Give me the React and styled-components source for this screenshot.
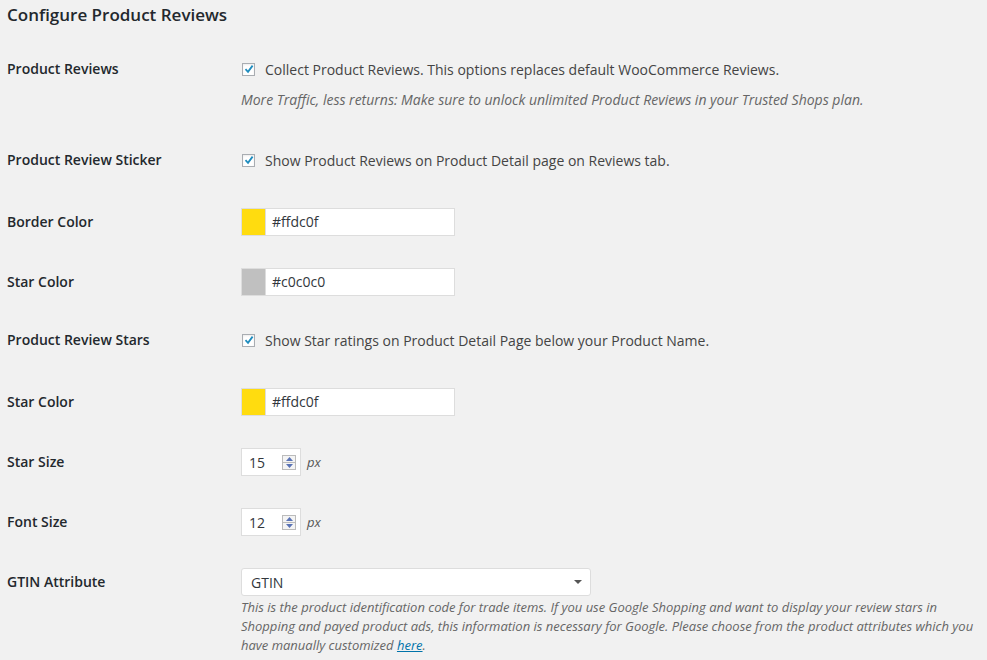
import React from 'react';
import styled, { createGlobalStyle } from 'styled-components';

//------------- Styling -------------//

const GlobalStyle = createGlobalStyle`
    html, body {
        margin: 0;
        padding: 0;
        background: #f1f1f1;
    }
    body {
        font-family: "Open Sans", "Liberation Sans", sans-serif;
        font-size: 14px;
        color: #444;
    }
`;

const Page = styled.div`
    padding: 0 7px;
`;

const Heading = styled.h2`
    margin: 0 0 11px;
    font-size: 17px;
    line-height: 30px;
    font-weight: 600;
    color: #23282d;
`;

const Row = styled.div`
    display: grid;
    grid-template-columns: 234px 1fr;
    padding: ${p => (p.check ? '14px 0 18px' : '16px 0')};
`;

const Label = styled.div`
    font-weight: 600;
    color: #23282d;
    line-height: 28px;
`;

const Field = styled.div`
    display: flex;
    flex-direction: column;
`;

const Line = styled.div`
    display: flex;
    align-items: center;
    height: 28px;
    gap: ${p => p.gap || 0}px;
`;

const Box = styled.span`
    width: 11px;
    height: 11px;
    border: 1px solid #a9adb2;
    background: #fff;
    display: flex;
    align-items: center;
    justify-content: center;
    margin-left: 1px;
    box-shadow: inset 0 1px 2px rgba(0, 0, 0, 0.08);
`;

const Description = styled.p`
    margin: ${p => p.space || '7px 0 5px'};
    font-size: ${p => p.size || 13}px;
    line-height: 19px;
    font-style: italic;
    color: #666;
    max-width: 740px;

    a {
        color: #0073aa;
        text-decoration: underline;
    }
`;

const ColorField = styled.div`
    display: flex;
    width: 212px;
    height: 26px;
    border: 1px solid #ddd;
    background: #fff;
`;

const Swatch = styled.span`
    width: 23px;
    background: ${p => p.color};
    border-right: 1px solid #ddd;
`;

const ColorValue = styled.span`
    padding-left: 6px;
    line-height: 26px;
    color: #32373c;
`;

const NumberField = styled.div`
    display: flex;
    align-items: center;
    justify-content: space-between;
    box-sizing: border-box;
    width: 60px;
    height: 28px;
    padding: 0 3px 0 7px;
    border: 1px solid #ddd;
    background: #fff;
    color: #32373c;
`;

const Spinner = styled.span`
    display: flex;
    flex-direction: column;
    width: 14px;
    height: 15px;
    border: 1px solid #bbb;
    background: #f4f4f4;
    box-sizing: border-box;
    margin-right: 1px;
`;

const SpinHalf = styled.span`
    flex: 1;
    display: flex;
    align-items: center;
    justify-content: center;
    & + & {
        border-top: 1px solid #bbb;
    }
`;

const Unit = styled.span`
    font-style: italic;
    font-size: 13px;
    color: #555;
`;

const Select = styled.div`
    display: flex;
    align-items: center;
    justify-content: space-between;
    box-sizing: border-box;
    width: 350px;
    height: 28px;
    padding: 0 8px 0 9px;
    border: 1px solid #ddd;
    border-radius: 3px;
    background: #fff;
    color: #32373c;
`;

//------------- Component -------------//

const Check = ({ children }) => (
    <Line gap={10}>
        <Box>
            <svg width="10" height="10" viewBox="0 0 10 10">
                <path d="M1.5 5.2 L4 7.8 L8.6 1.6" fill="none" stroke="#1e8cbe" strokeWidth="1.8" />
            </svg>
        </Box>
        <span>{children}</span>
    </Line>
);

const Arrow = ({ up }) => (
    <svg width="7" height="4" viewBox="0 0 7 4">
        <path d={up ? 'M0 4 L3.5 0 L7 4 Z' : 'M0 0 L3.5 4 L7 0 Z'} fill="#5a73b5" />
    </svg>
);

const Number = ({ value }) => (
    <Line gap={6}>
        <NumberField>
            <span>{value}</span>
            <Spinner>
                <SpinHalf><Arrow up /></SpinHalf>
                <SpinHalf><Arrow /></SpinHalf>
            </Spinner>
        </NumberField>
        <Unit>px</Unit>
    </Line>
);

const Color = ({ value }) => (
    <Line>
        <ColorField>
            <Swatch color={value} />
            <ColorValue>{value}</ColorValue>
        </ColorField>
    </Line>
);

export default function App() {
    return (
        <Page>
            <GlobalStyle />
            <Heading>Configure Product Reviews</Heading>

            <Row check>
                <Label>Product Reviews</Label>
                <Field>
                    <Check>Collect Product Reviews. This options replaces default WooCommerce Reviews.</Check>
                    <Description size={14}>More Traffic, less returns: Make sure to unlock unlimited Product Reviews in your Trusted Shops plan.</Description>
                </Field>
            </Row>

            <Row check>
                <Label>Product Review Sticker</Label>
                <Field>
                    <Check>Show Product Reviews on Product Detail page on Reviews tab.</Check>
                </Field>
            </Row>

            <Row>
                <Label>Border Color</Label>
                <Field><Color value="#ffdc0f" /></Field>
            </Row>

            <Row>
                <Label>Star Color</Label>
                <Field><Color value="#c0c0c0" /></Field>
            </Row>

            <Row check>
                <Label>Product Review Stars</Label>
                <Field>
                    <Check>Show Star ratings on Product Detail Page below your Product Name.</Check>
                </Field>
            </Row>

            <Row>
                <Label>Star Color</Label>
                <Field><Color value="#ffdc0f" /></Field>
            </Row>

            <Row>
                <Label>Star Size</Label>
                <Field><Number value="15" /></Field>
            </Row>

            <Row>
                <Label>Font Size</Label>
                <Field><Number value="12" /></Field>
            </Row>

            <Row>
                <Label>GTIN Attribute</Label>
                <Field>
                    <Line>
                        <Select>
                            <span>GTIN</span>
                            <svg width="8" height="4" viewBox="0 0 8 4">
                                <path d="M0 0 L8 0 L4 4 Z" fill="#555" />
                            </svg>
                        </Select>
                    </Line>
                    <Description space="2px 0 0">
                        This is the product identification code for trade items. If you use Google Shopping and want to display your review stars in Shopping and payed product ads, this information is necessary for Google. Please choose from the product attributes which you have manually customized <a href="#">here</a>.
                    </Description>
                </Field>
            </Row>
        </Page>
    );
}
